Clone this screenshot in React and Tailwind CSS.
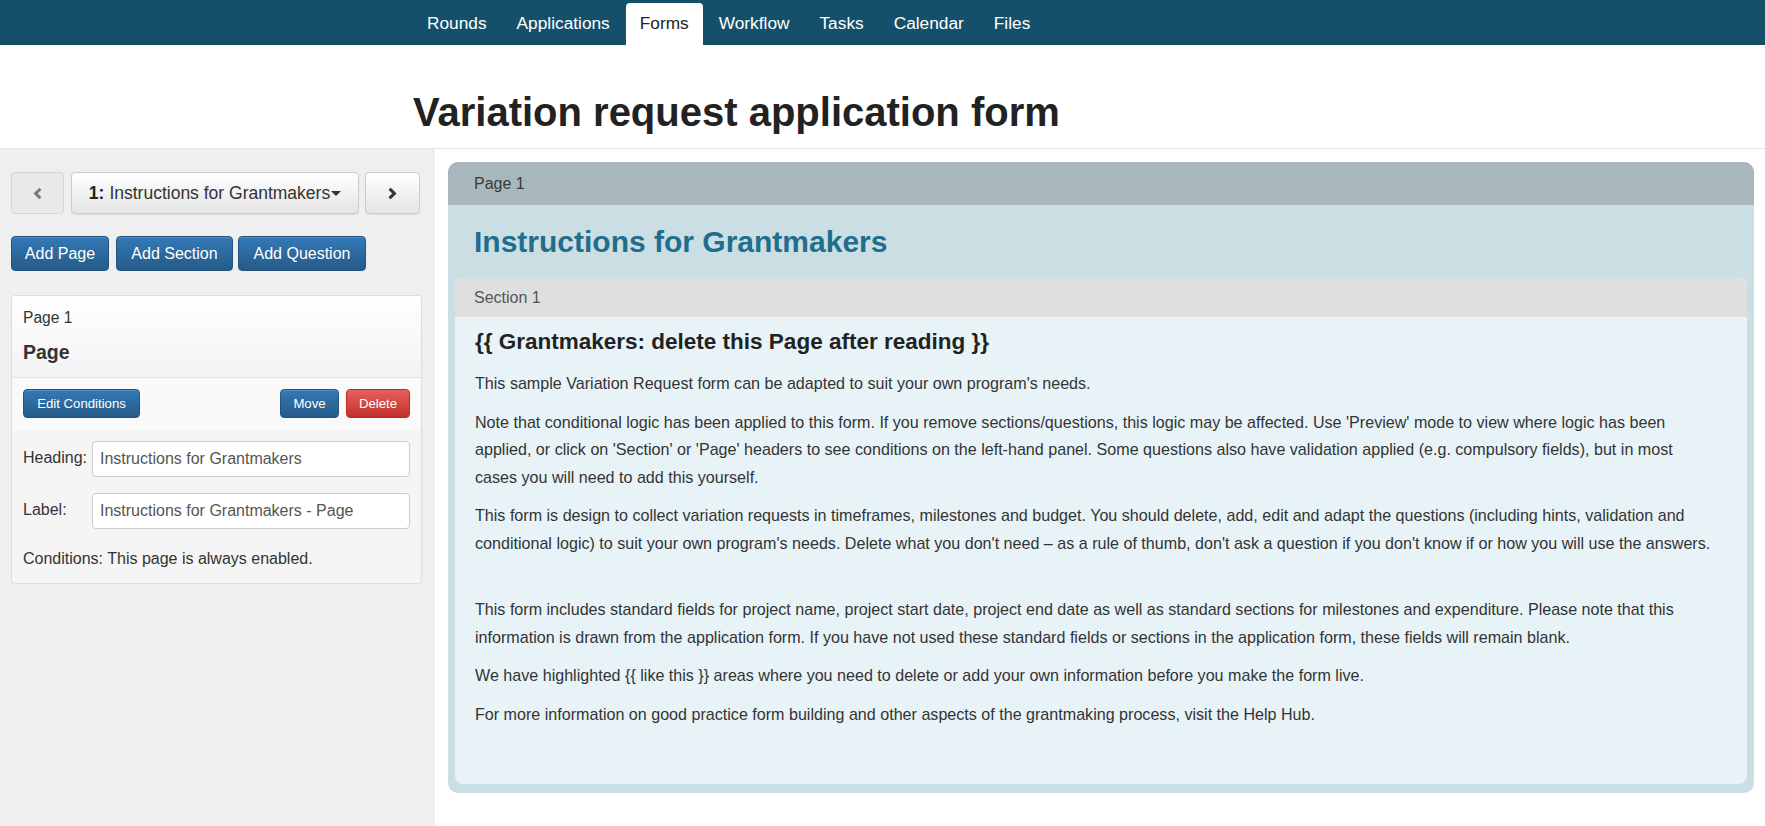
const navItems = ['Rounds', 'Applications', 'Forms', 'Workflow', 'Tasks', 'Calendar', 'Files'];

const Chevron = ({ dir, className }) => (
  <svg viewBox="0 0 12 14" className={className} fill="none" stroke="currentColor" strokeWidth="3.4" strokeLinecap="square">
    {dir === 'left' ? <polyline points="8,3 4,7 8,11" /> : <polyline points="4,3 8,7 4,11" />}
  </svg>
);

const BlueBtn = ({ children, className = '' }) => (
  <button className={`rounded-[4px] border border-[#245580] bg-gradient-to-b from-[#337ab7] to-[#265a88] text-white leading-none shadow-[inset_0_1px_0_rgba(255,255,255,0.15)] ${className}`}>
    {children}
  </button>
);

// each paragraph is kept as the lines the reference shows
const paragraphs = [
  ["This sample Variation Request form can be adapted to suit your own program's needs."],
  [
    "Note that conditional logic has been applied to this form. If you remove sections/questions, this logic may be affected. Use 'Preview' mode to view where logic has been",
    "applied, or click on 'Section' or 'Page' headers to see conditions on the left-hand panel. Some questions also have validation applied (e.g. compulsory fields), but in most",
    'cases you will need to add this yourself.',
  ],
  [
    'This form is design to collect variation requests in timeframes, milestones and budget. You should delete, add, edit and adapt the questions (including hints, validation and',
    "conditional logic) to suit your own program's needs. Delete what you don't need – as a rule of thumb, don't ask a question if you don't know if or how you will use the answers.",
  ],
  null,
  [
    'This form includes standard fields for project name, project start date, project end date as well as standard sections for milestones and expenditure. Please note that this',
    'information is drawn from the application form. If you have not used these standard fields or sections in the application form, these fields will remain blank.',
  ],
  ['We have highlighted {{ like this }} areas where you need to delete or add your own information before you make the form live.'],
  ['For more information on good practice form building and other aspects of the grantmaking process, visit the Help Hub.'],
];

export default function App() {
  return (
    <div className="min-h-screen flex flex-col font-['Liberation_Sans',Arial,sans-serif] text-[#333]">
      {/* top nav */}
      <nav className="h-[45px] bg-[#15506b] flex items-end pl-[412px]">
        {navItems.map((item) =>
          item === 'Forms' ? (
            <a key={item} className="h-[42px] px-[14px] ml-[1px] mr-[1px] flex items-center pb-[1px] bg-white rounded-t-[4px] text-[17.3px] text-[#222]">
              {item}
            </a>
          ) : (
            <a key={item} className="h-[45px] px-[15px] flex items-center pt-[2px] text-[17.3px] text-white">
              {item}
            </a>
          )
        )}
      </nav>

      {/* page title */}
      <header className="h-[104px] border-b border-[#e5e5e5] pl-[413px] pt-[43px]">
        <h1 className="text-[40px] leading-[48px] font-bold text-[#222]">Variation request application form</h1>
      </header>

      <div className="flex flex-1">
        {/* left sidebar */}
        <aside className="w-[435px] shrink-0 bg-[#efefef] pl-[11px] pr-[13px] pt-[23px]">
          <div className="flex items-center">
            <button className="w-[53px] h-[42px] rounded-[4px] border border-[#d4d4d4] bg-[#e9e9e9] flex items-center justify-center text-[#7a7a7a]">
              <Chevron dir="left" className="w-[11px] h-[13px]" />
            </button>
            <button className="ml-[7px] w-[288px] h-[42px] rounded-[4px] border border-[#cccccc] bg-gradient-to-b from-white to-[#e4e4e4] shadow-[0_1px_1px_rgba(0,0,0,0.08)] flex items-center justify-center text-[17.5px] text-[#333]">
              <span className="font-bold text-[#222]">1:</span>
              <span className="ml-[5px]">Instructions for Grantmakers</span>
              <span className="ml-[1px] mt-[1px] w-0 h-0 border-l-[5px] border-r-[5px] border-t-[5px] border-l-transparent border-r-transparent border-t-[#333]"></span>
            </button>
            <button className="ml-[6px] w-[55px] h-[42px] rounded-[4px] border border-[#cccccc] bg-gradient-to-b from-white to-[#e4e4e4] shadow-[0_1px_1px_rgba(0,0,0,0.08)] flex items-center justify-center text-[#333]">
              <Chevron dir="right" className="w-[11px] h-[13px]" />
            </button>
          </div>

          <div className="flex mt-[22px]">
            <BlueBtn className="w-[98px] h-[35px] text-[16px] pt-[1px]">Add Page</BlueBtn>
            <BlueBtn className="ml-[7px] w-[117px] h-[35px] text-[16px] pt-[1px]">Add Section</BlueBtn>
            <BlueBtn className="ml-[5px] w-[128px] h-[35px] text-[16px] pt-[1px]">Add Question</BlueBtn>
          </div>

          {/* page panel */}
          <div className="mt-[24px] w-[411px] rounded-[4px] border border-[#dddddd] bg-[#f5f5f5] overflow-hidden">
            <div className="bg-gradient-to-b from-white to-[#f3f3f3] border-b border-[#e2e2e2] px-[11px] pt-[10px] pb-[12px]">
              <div className="text-[15.6px] leading-[24px] text-[#333]">Page 1</div>
              <div className="mt-[9px] text-[19.5px] leading-[26px] font-bold text-[#333]">Page</div>
            </div>
            <div className="bg-[#fafafa] flex items-center px-[11px] pt-[11px] pb-[12px]">
              <BlueBtn className="w-[117px] h-[29px] text-[13.2px]">Edit Conditions</BlueBtn>
              <div className="flex-1" />
              <BlueBtn className="w-[59px] h-[29px] text-[13.2px]">Move</BlueBtn>
              <button className="ml-[7px] w-[64px] h-[29px] rounded-[4px] border border-[#b92c28] bg-gradient-to-b from-[#e5605c] to-[#c12e2a] text-white text-[13.2px] leading-none">
                Delete
              </button>
            </div>
            <div className="px-[11px] pt-[11px] pb-[13px]">
              <div className="flex items-center">
                <label className="w-[69px] text-[16px] text-[#333] -mt-[2px]">Heading:</label>
                <div className="flex-1 h-[36px] rounded-[4px] border border-[#cccccc] bg-white flex items-center pl-[7px] text-[16px] text-[#555]">
                  Instructions for Grantmakers
                </div>
              </div>
              <div className="flex items-center mt-[16px]">
                <label className="w-[69px] text-[16px] text-[#333] -mt-[2px]">Label:</label>
                <div className="flex-1 h-[36px] rounded-[4px] border border-[#cccccc] bg-white flex items-center pl-[7px] text-[16px] text-[#555]">
                  Instructions for Grantmakers - Page
                </div>
              </div>
              <p className="mt-[19px] text-[16px] leading-[22px] text-[#333]">Conditions: This page is always enabled.</p>
            </div>
          </div>
        </aside>

        {/* form preview */}
        <main className="flex-1 pl-[13px] pr-[11px] pt-[13px] bg-white">
          <div className="rounded-[10px] bg-[#cadee4] pb-[9px]">
            <div className="h-[43px] rounded-t-[10px] bg-[#a8b7bc] flex items-center pl-[26px] pt-[1px] text-[16px] text-[#3a3a3a]">Page 1</div>
            <h2 className="mt-[20px] pl-[26px] text-[30px] leading-[33px] font-bold text-[#1f6e8c]">Instructions for Grantmakers</h2>
            <div className="mt-[19px] mx-[7px] rounded-[8px] overflow-hidden bg-[#e8f3f8]">
              <div className="h-[40px] bg-[#dfdfdf] flex items-center pl-[19px] pt-[1px] text-[16px] text-[#555]">Section 1</div>
              <div className="pl-[20px] pr-[4px] pt-[11px] pb-[45px] text-[16.1px] leading-[27.5px] text-[#333]">
                <h3 className="text-[22.5px] leading-[27px] font-bold text-[#222] mb-[15px]">{'{{ Grantmakers: delete this Page after reading }}'}</h3>
                {paragraphs.map((lines, i) =>
                  lines ? (
                    <p key={i} className="mb-[11px] whitespace-nowrap">
                      {lines.map((line, j) => (
                        <span key={j}>
                          {line}
                          {j < lines.length - 1 && <br />}
                        </span>
                      ))}
                    </p>
                  ) : (
                    <div key={i} className="h-[28px]" />
                  )
                )}
              </div>
            </div>
          </div>
        </main>
      </div>
    </div>
  );
}
